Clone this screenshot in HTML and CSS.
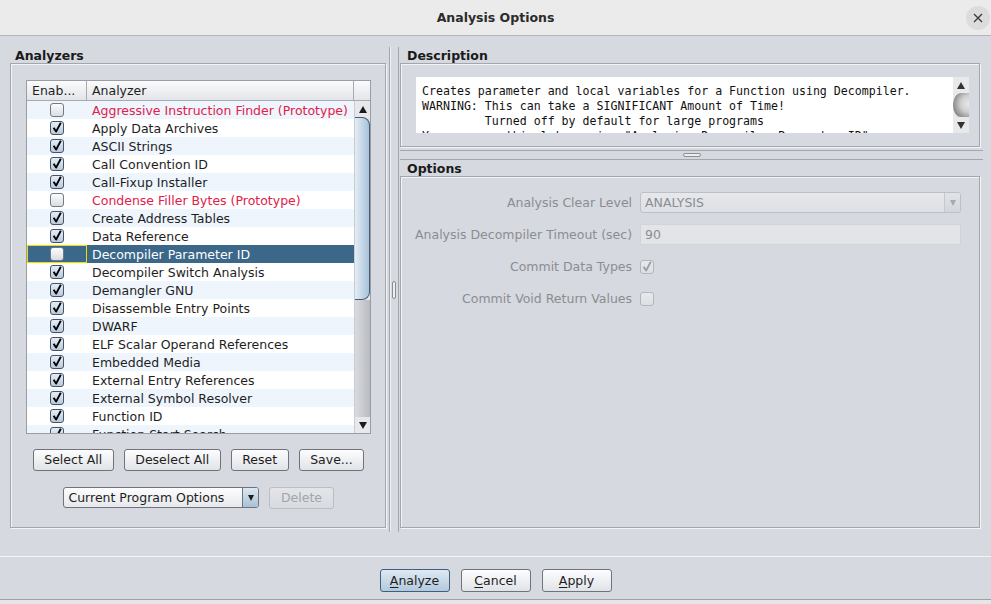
FILE: index.html
```html
<!DOCTYPE html>
<html lang="en">
<head>
<meta charset="utf-8">
<title>Analysis Options</title>
<link rel="stylesheet" href="styles.css">
</head>
<body>
<svg class="defs" width="0" height="0" aria-hidden="true">
  <symbol id="chk" viewBox="0 0 12 12"><path d="M2.6 5.8 L5.1 9.6 L9.8 0.8" fill="none" stroke="currentColor" stroke-width="1.9" stroke-linejoin="round"/></symbol>
</svg>
<div class="window">
  <header class="titlebar">
    <span></span>
    <h1 class="title">Analysis Options</h1>
    <button class="close" aria-label="Close"><svg width="10" height="10" viewBox="0 0 10 10"><path d="M1 1 L9 9 M9 1 L1 9" stroke="#3a3a3a" stroke-width="1.3"/></svg></button>
  </header>

  <main class="content">
    <section class="pane left">
      <h2 class="group-label">Analyzers</h2>
      <div class="group analyzers">
        <div class="table">
          <div class="thead">
            <div class="th c1">Enab...</div>
            <div class="th c2">Analyzer</div>
            <div class="th corner"></div>
          </div>
          <div class="tbody">
            <div class="rows">
              <div class="row odd"><div class="td c1"><span class="cb"></span></div><div class="td c2 proto">Aggressive Instruction Finder (Prototype)</div></div>
              <div class="row"><div class="td c1"><span class="cb on"><svg><use href="#chk"/></svg></span></div><div class="td c2">Apply Data Archives</div></div>
              <div class="row odd"><div class="td c1"><span class="cb on"><svg><use href="#chk"/></svg></span></div><div class="td c2">ASCII Strings</div></div>
              <div class="row"><div class="td c1"><span class="cb on"><svg><use href="#chk"/></svg></span></div><div class="td c2">Call Convention ID</div></div>
              <div class="row odd"><div class="td c1"><span class="cb on"><svg><use href="#chk"/></svg></span></div><div class="td c2">Call-Fixup Installer</div></div>
              <div class="row"><div class="td c1"><span class="cb"></span></div><div class="td c2 proto">Condense Filler Bytes (Prototype)</div></div>
              <div class="row odd"><div class="td c1"><span class="cb on"><svg><use href="#chk"/></svg></span></div><div class="td c2">Create Address Tables</div></div>
              <div class="row"><div class="td c1"><span class="cb on"><svg><use href="#chk"/></svg></span></div><div class="td c2">Data Reference</div></div>
              <div class="row sel"><div class="td c1 focus"><span class="cb"></span></div><div class="td c2">Decompiler Parameter ID</div></div>
              <div class="row"><div class="td c1"><span class="cb on"><svg><use href="#chk"/></svg></span></div><div class="td c2">Decompiler Switch Analysis</div></div>
              <div class="row odd"><div class="td c1"><span class="cb on"><svg><use href="#chk"/></svg></span></div><div class="td c2">Demangler GNU</div></div>
              <div class="row"><div class="td c1"><span class="cb on"><svg><use href="#chk"/></svg></span></div><div class="td c2">Disassemble Entry Points</div></div>
              <div class="row odd"><div class="td c1"><span class="cb on"><svg><use href="#chk"/></svg></span></div><div class="td c2">DWARF</div></div>
              <div class="row"><div class="td c1"><span class="cb on"><svg><use href="#chk"/></svg></span></div><div class="td c2">ELF Scalar Operand References</div></div>
              <div class="row odd"><div class="td c1"><span class="cb on"><svg><use href="#chk"/></svg></span></div><div class="td c2">Embedded Media</div></div>
              <div class="row"><div class="td c1"><span class="cb on"><svg><use href="#chk"/></svg></span></div><div class="td c2">External Entry References</div></div>
              <div class="row odd"><div class="td c1"><span class="cb on"><svg><use href="#chk"/></svg></span></div><div class="td c2">External Symbol Resolver</div></div>
              <div class="row"><div class="td c1"><span class="cb on"><svg><use href="#chk"/></svg></span></div><div class="td c2">Function ID</div></div>
              <div class="row odd"><div class="td c1"><span class="cb on"><svg><use href="#chk"/></svg></span></div><div class="td c2">Function Start Search</div></div>
            </div>
            <div class="vscroll">
              <div class="arrow up"></div>
              <div class="thumb"></div>
              <div class="track"></div>
              <div class="arrow down"></div>
            </div>
          </div>
        </div>
        <div class="btn-row">
          <button class="btn">Select All</button>
          <button class="btn">Deselect All</button>
          <button class="btn">Reset</button>
          <button class="btn">Save...</button>
        </div>
        <div class="btn-row second">
          <div class="combo"><span class="combo-text">Current Program Options</span><span class="combo-btn"><span class="tri-down"></span></span></div>
          <button class="btn disabled">Delete</button>
        </div>
      </div>
    </section>

    <div class="splitter"><div class="split-bar"><span class="grip"></span></div></div>

    <section class="pane right">
      <h2 class="group-label rlabel">Description</h2>
      <div class="group desc">
        <div class="textarea">
          <pre class="desc-text">Creates parameter and local variables for a Function using Decompiler.
WARNING: This can take a SIGNIFICANT Amount of Time!
         Turned off by default for large programs
You can run this later using "Analysis-&gt;Decompiler Parameter ID"</pre>
          <div class="vscroll small">
            <div class="arrow up"></div>
            <div class="ball"></div>
            <div class="arrow down"></div>
          </div>
        </div>
      </div>
      <div class="hsplit"><div class="hbar"><span class="hgrip"></span></div></div>
      <h2 class="group-label rlabel">Options</h2>
      <div class="group options">
        <div class="opt-grid">
          <span class="opt-label">Analysis Clear Level</span>
          <div class="combo dis"><span class="combo-text">ANALYSIS</span><span class="combo-btn"><span class="tri-down"></span></span></div>
          <span class="opt-label">Analysis Decompiler Timeout (sec)</span>
          <div class="field">90</div>
          <span class="opt-label">Commit Data Types</span>
          <span class="cb dis"><svg><use href="#chk"/></svg></span>
          <span class="opt-label">Commit Void Return Values</span>
          <span class="cb dis"></span>
        </div>
      </div>
    </section>
  </main>

  <footer class="footer">
    <button class="btn wide default"><u>A</u>nalyze</button>
    <button class="btn wide"><u>C</u>ancel</button>
    <button class="btn wide"><u>A</u>pply</button>
  </footer>
</div>
</body>
</html>
```

FILE: styles.css
```css
* { box-sizing: border-box; }
html, body { margin: 0; padding: 0; }
body {
  width: 991px;
  height: 604px;
  overflow: hidden;
  background: #e6e6e6;
  font-family: "DejaVu Sans", "Liberation Sans", sans-serif;
  font-size: 12.5px;
  color: #1e1e1e;
}
.defs { position: absolute; width: 0; height: 0; overflow: hidden; }

.window {
  height: 600px;
  display: flex;
  flex-direction: column;
  background: #d6d9df;
  border-bottom: 1px solid #9da0a4;
}

/* title bar */
.titlebar {
  flex: none;
  height: 36px;
  background: #ebebeb;
  border-bottom: 1px solid #b5b5b5;
  display: grid;
  grid-template-columns: 1fr auto 1fr;
  align-items: center;
}
.title {
  margin: 0;
  font-size: 12.5px;
  font-weight: bold;
  color: #2b2b2b;
}
.close {
  justify-self: end;
  margin-right: 1px;
  width: 24px;
  height: 24px;
  padding: 0;
  border: none;
  border-radius: 50%;
  background: #dcdcdc;
  display: flex;
  align-items: center;
  justify-content: center;
}

/* content */
.content {
  flex: none;
  height: 520px;
  display: flex;
}
.pane { display: flex; flex-direction: column; }
.pane.left { width: 386px; padding: 12px 0 0 10px; }
.pane.right { flex: 1; padding: 12px 11px 0 0; }

.group-label {
  margin: 0 0 0 5px;
  font-size: 12.5px;
  font-weight: bold;
  line-height: 15px;
  color: #1a1a1a;
}
.rlabel { margin-left: 7px; }
.group {
  border: 1px solid #a3a6ab;
  box-shadow: inset 1px 1px 0 #f3f4f6, 1px 1px 0 #f3f4f6;
}
.analyzers {
  height: 465px;
  padding: 16px 14px 0 15px;
}

/* table */
.table {
  height: 354px;
  border: 1px solid #9a9ea4;
  background: #fff;
  display: flex;
  flex-direction: column;
}
.thead {
  flex: none;
  height: 20px;
  display: flex;
  border-bottom: 1px solid #a7aab0;
  background: linear-gradient(#fbfbfc, #e3e5e9);
}
.th {
  line-height: 19px;
  padding-left: 5px;
  border-right: 1px solid #a7aab0;
  white-space: nowrap;
  overflow: hidden;
}
.th.c1 { width: 60px; }
.th.c2 { flex: 1; }
.th.corner { width: 16px; border-right: none; }

.tbody { flex: 1; min-height: 0; display: flex; overflow: hidden; }
.rows { flex: 1; overflow: hidden; }
.row { height: 18px; display: flex; align-items: stretch; overflow: hidden; }
.row.odd { background: #eef5fd; }
.td.c1 {
  width: 60px;
  flex: none;
  display: flex;
  align-items: center;
  justify-content: center;
}
.td.c2 { padding-left: 5px; line-height: 20px; white-space: nowrap; }
.proto { color: #e0214b; }
.row.sel { background: #3b6788; color: #fff; }
.td.focus { border: 1px solid #ece000; }

/* checkbox */
.cb {
  display: block;
  width: 14px;
  height: 14px;
  border: 1px solid #737a84;
  border-radius: 3px;
  background: linear-gradient(#fbfcfd, #d9dde3);
  color: #000;
}
.cb.on {
  border-color: #44526a;
  background: linear-gradient(#e6eef6, #b8c9da);
}
.cb svg { display: block; width: 12px; height: 12px; }
.cb.dis {
  border-color: #b3b7bd;
  background: linear-gradient(#e8eaed, #dcdfe3);
  color: #9da1a7;
}

/* scrollbars */
.vscroll {
  width: 16px;
  flex: none;
  display: flex;
  flex-direction: column;
  background: #e6e8eb;
  border-left: 1px solid #c9ccd1;
}
.arrow {
  flex: none;
  height: 16px;
  display: flex;
  align-items: center;
  justify-content: center;
}
.arrow.up::before, .arrow.down::before {
  content: "";
  border-left: 4px solid transparent;
  border-right: 4px solid transparent;
}
.arrow.up::before { border-bottom: 7px solid #1c1c1c; }
.arrow.down::before { border-top: 7px solid #1c1c1c; }
.thumb {
  flex: none;
  height: 183px;
  background: linear-gradient(to right, #e4edf6, #a8c2d9);
  border: 1px solid #475b71;
  border-left: none;
  border-radius: 0 8px 8px 0;
}
.track {
  flex: 1;
  background: linear-gradient(to right, #d9dbdf, #b8bbc0);
}
.vscroll.small { border-left: none; background: #e8e9eb; }
.vscroll.small .arrow.up::before { border-bottom-color: #333; }
.vscroll.small .arrow.down::before { border-top-color: #333; }
.ball {
  flex: none;
  height: 24px;
  border-radius: 50% 0 0 50%;
  background: radial-gradient(circle at 100% 45%, #e9e9e9 0, #cfcfcf 40%, #8d8d8d 75%, #4d4d4d 100%);
}

/* buttons */
.btn-row {
  display: flex;
  justify-content: center;
  align-items: flex-start;
  gap: 10px;
  margin-top: 15px;
}
.btn-row.second { margin-top: 16px; }
.btn {
  height: 22px;
  padding: 0 10.5px;
  border: 1px solid #6f747c;
  border-radius: 3px;
  background: linear-gradient(#fdfdfe, #e0e3e7);
  font: inherit;
  color: #1e1e1e;
  line-height: 20px;
}
.btn.disabled {
  border-color: #babec4;
  background: linear-gradient(#e3e5e9, #d8dbe0);
  color: #a2a5aa;
}
.btn.wide { width: 70px; height: 23px; padding: 0; }
.btn.default {
  border-color: #405f80;
  background: linear-gradient(#dfe9f3, #b2c9dd);
}
.btn u { text-decoration-thickness: 1px; text-underline-offset: 2px; }

.combo {
  width: 196px;
  height: 21px;
  display: flex;
  border: 1px solid #6f747c;
  border-radius: 3px;
  background: linear-gradient(#fdfdfe, #e6e8eb);
  overflow: hidden;
}
.combo-text { flex: 1; padding-left: 4px; line-height: 19px; white-space: nowrap; }
.combo-btn {
  width: 16px;
  flex: none;
  border-left: 1px solid #6f747c;
  background: linear-gradient(#dce7f1, #a9c1d6);
  display: flex;
  align-items: center;
  justify-content: center;
}
.tri-down {
  border-left: 3.5px solid transparent;
  border-right: 3.5px solid transparent;
  border-top: 6px solid #1c1c1c;
}

/* splitter */
.splitter {
  width: 14px;
  flex: none;
  padding: 11px 0 24px 3px;
}
.split-bar {
  width: 10px;
  height: 100%;
  border-left: 1px solid #a3a6ab;
  border-right: 1px solid #a3a6ab;
  box-shadow: inset 1px 0 0 #eef0f2;
  display: flex;
  align-items: center;
  justify-content: center;
}
.grip {
  width: 4px;
  height: 18px;
  border: 1px solid #8a8d92;
  border-radius: 2px;
  background: #eceef0;
}

/* description */
.desc { height: 84px; padding: 13px 10px 12px 15px; }
.textarea { height: 56px; display: flex; background: #fff; }
.desc-text {
  flex: 1;
  margin: 0;
  padding: 7px 6px 0;
  overflow: hidden;
  font-family: "DejaVu Sans Mono", "Liberation Mono", monospace;
  font-size: 11.6px;
  line-height: 15px;
  color: #111;
  white-space: pre;
}

.hsplit { height: 14px; padding-top: 3px; margin-right: -3px; }
.hbar {
  height: 10px;
  border-top: 1px solid #a3a6ab;
  border-bottom: 1px solid #a3a6ab;
  display: flex;
  align-items: center;
  justify-content: center;
}
.hgrip {
  width: 18px;
  height: 4px;
  border: 1px solid #8a8d92;
  border-radius: 2px;
  background: #eceef0;
}

/* options */
.options { height: 352px; }
.opt-grid {
  display: grid;
  grid-template-columns: auto 1fr;
  grid-auto-rows: 21px;
  column-gap: 8px;
  row-gap: 11px;
  align-items: center;
  padding: 15px 18px 0 14px;
}
.opt-label { justify-self: end; color: #8a8d92; white-space: nowrap; }
.combo.dis {
  width: auto;
  border-color: #bcc0c6;
  background: linear-gradient(#e6e8eb, #dde0e4);
  color: #8a8d92;
}
.combo.dis .combo-btn {
  border-left-color: #c6c9ce;
  background: linear-gradient(#e1e4e8, #d3d6db);
}
.combo.dis .tri-down { border-top-color: #a6a9ae; }
.field {
  height: 21px;
  padding-left: 4px;
  line-height: 19px;
  border: 1px solid #d0d3d7;
  background: #e2e4e8;
  color: #8a8d92;
}

/* footer */
.footer {
  flex: none;
  height: 43px;
  border-top: 1px solid #f4f5f7;
  display: flex;
  justify-content: center;
  align-items: flex-start;
  gap: 11px;
  padding-top: 12px;
}
```
